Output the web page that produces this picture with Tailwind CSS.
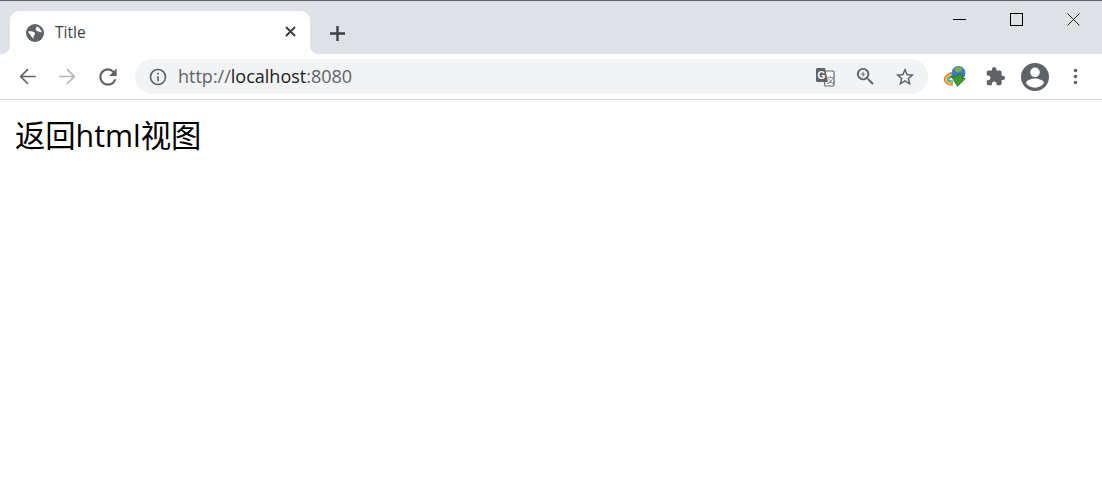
<!DOCTYPE html>
<html lang="zh">
<head>
  <meta charset="UTF-8" />
  <title>Title</title>
  <script src="https://cdn.jsdelivr.net/npm/@tailwindcss/browser@4"></script>
</head>
<body class="bg-white h-[488px] w-[1102px] overflow-hidden font-['Open_Sans','Noto_Sans_CJK_SC',sans-serif]">

  <!-- tab strip -->
  <div class="h-[54px] bg-[#dee1e6] border-t border-[#5f6368] flex items-end pl-[10px]">
    <div class="relative w-[300px] h-[43px] bg-white rounded-t-[9px] flex items-center pl-[16px] pr-[14px]">
      <svg class="absolute -left-[8px] bottom-0 w-[8px] h-[8px]" viewBox="0 0 8 8"><path d="M8 0v8H0a8 8 0 0 0 8-8z" fill="#fff"/></svg>
      <svg class="absolute -right-[8px] bottom-0 w-[8px] h-[8px]" viewBox="0 0 8 8"><path d="M0 0v8h8a8 8 0 0 1-8-8z" fill="#fff"/></svg>
      <svg class="w-[18px] h-[18px]" viewBox="0 0 24 24">
        <circle cx="12" cy="12" r="12" fill="#5f6368"/>
        <path d="M3 10c3-1 6 0 8 1s1 3 0 4-1 3-1 5c-1-2-3-3-4-5s-3-3-3-5z" fill="#fff"/>
        <path d="M14 3c3 1 6 4 7 8-2 0-3-1-5-1-1-1-3-1-3-3s2-2 1-4z" fill="#fff"/>
      </svg>
      <span class="ml-[11px] text-[15.500px] text-[#3c4043]">Title</span>
      <svg class="ml-auto mb-[2px] w-[11px] h-[11px]" viewBox="0 0 11 11" stroke="#3c4043" stroke-width="2" fill="none"><path d="M1 1l9 9M10 1l-9 9"/></svg>
    </div>
    <svg class="ml-[20px] mb-[13px] w-[15px] h-[15px]" viewBox="0 0 15 15" stroke="#3c4043" stroke-width="2.400" fill="none"><path d="M7.500 0v15M0 7.500h15"/></svg>
    <!-- window controls -->
    <div class="ml-auto self-start flex items-center h-[37px] pr-[22px] gap-[44px]">
      <div class="w-[13px] h-px bg-black"></div>
      <div class="w-[13px] h-[13px] border border-black"></div>
      <svg class="w-[13px] h-[13px]" viewBox="0 0 13 13" stroke="#222" stroke-width="1" fill="none"><path d="M.5.500l12 12M12.500.500l-12 12"/></svg>
    </div>
  </div>

  <!-- toolbar -->
  <div class="h-[46px] bg-white border-b border-[#dadce0] flex items-center pl-[7px]">
    <div class="w-[40px] flex justify-center">
      <svg class="w-[25px] h-[25px]" viewBox="0 0 24 24" fill="#5f6368"><path d="M20 11.200H7.300l5.800-5.800L12 4.300l-7.700 7.700 7.700 7.700 1.100-1.100-5.800-5.800H20v-1.600z"/></svg>
    </div>
    <div class="w-[40px] flex justify-center">
      <svg class="w-[25px] h-[25px]" viewBox="0 0 24 24" fill="#b4b6b9"><path d="M12 4.300l-1.100 1.100 5.800 5.800H4v1.600h12.700l-5.800 5.800 1.100 1.100 7.700-7.700z"/></svg>
    </div>
    <div class="w-[40px] ml-[1px] flex justify-center">
      <svg class="w-[26px] h-[26px]" viewBox="0 0 24 24" fill="#5f6368"><path d="M17.650 6.350A7.960 7.960 0 0 0 12 4c-4.420 0-7.990 3.580-7.990 8s3.570 8 7.990 8c3.730 0 6.840-2.550 7.730-6h-2.080A5.990 5.990 0 0 1 12 18c-3.310 0-6-2.690-6-6s2.690-6 6-6c1.660 0 3.140.69 4.220 1.780L13 11h7V4l-2.350 2.350z"/></svg>
    </div>
    <!-- omnibox -->
    <div class="ml-[7px] w-[793px] h-[35px] rounded-full bg-[#f1f3f4] flex items-center pl-[13px] pr-[3px]">
      <svg class="w-[20px] h-[20px]" viewBox="0 0 24 24" fill="#5f6368"><path d="M11 7h2v2h-2zm0 4h2v6h-2zm1-9a10 10 0 1 0 0 20 10 10 0 0 0 0-20zm0 18a8 8 0 1 1 0-16 8 8 0 0 1 0 16z"/></svg>
      <span class="ml-[10px] text-[18px] text-[#5f6368]">http://<span class="text-[#202124]">localhost</span>:8080</span>
      <!-- translate -->
      <div class="ml-auto w-[40px] flex justify-center">
        <svg class="w-[20px] h-[20px]" viewBox="0 0 20 20"><path d="M8 4h9.500a1.500 1.500 0 0 1 1.500 1.500v12a1.500 1.500 0 0 1-1.500 1.500H10z" fill="#fff" stroke="#5f6368" stroke-width="1.200"/><path d="M2.500 1H10l3 14H2.500A1.500 1.500 0 0 1 1 13.500v-11A1.500 1.500 0 0 1 2.500 1z" fill="#5f6368"/><text x="2.500" y="12" font-size="10" font-weight="700" fill="#fff" font-family="Liberation Sans">G</text><text x="11.500" y="16" font-size="8" fill="#5f6368" font-family="Noto Sans CJK SC">文</text></svg>
      </div>
      <div class="w-[40px] flex justify-center">
        <svg class="w-[23px] h-[23px]" viewBox="0 0 24 24" fill="#5f6368"><path d="M15.500 14h-.790l-.280-.270A6.470 6.470 0 0 0 16 9.500 6.500 6.500 0 1 0 9.500 16c1.610 0 3.090-.590 4.230-1.570l.270.280v.790l5 4.990L20.490 19l-4.990-5zm-6 0C7.010 14 5 11.990 5 9.500S7.010 5 9.500 5 14 7.010 14 9.500 11.990 14 9.500 14z"/><path d="M12 10h-2v2H9v-2H7V9h2V7h1v2h2v1z"/></svg>
      </div>
      <div class="w-[40px] flex justify-center">
        <svg class="w-[22px] h-[22px]" viewBox="0 0 24 24" fill="#5f6368"><path d="M22 9.240l-7.190-.620L12 2 9.190 8.630 2 9.240l5.460 4.730L5.820 21 12 17.270 18.180 21l-1.630-7.030L22 9.240zM12 15.400l-3.760 2.270 1-4.280-3.320-2.880 4.380-.380L12 6.100l1.710 4.040 4.380.380-3.320 2.880 1 4.280L12 15.400z"/></svg>
      </div>
    </div>
    <!-- idm extension -->
    <div class="ml-[7px] w-[40px] flex justify-center">
      <svg class="w-[24px] h-[24px]" viewBox="0 0 24 24" fill="none">
        <path d="M11 7.500C5 8 1.500 11.500 1.500 14.500S5 20 10 20" stroke="#e8703a" stroke-width="1.500"/>
        <path d="M11 9C6.500 9.500 3 12 3 14.500S6 18.600 10 18.600" stroke="#f2c230" stroke-width="1.400"/>
        <path d="M11 10.500C7.500 11 4.500 12.500 4.500 14.500S7 17.300 10 17.300" stroke="#5bb748" stroke-width="1.400"/>
        <path d="M11 12C8.500 12.300 6 13 6 14.500S8 16 10 16" stroke="#4a8fd0" stroke-width="1.200"/>
        <circle cx="15.500" cy="8" r="7" fill="#3d7cc9"/>
        <path d="M13 2.500c2-1 5-.5 6.500 1l-1.500 3-4.500 1-2-2.500z" fill="#7fb04a"/>
        <path d="M8 11l6 1 .5-3 5 .5-.5 3.500 3.500.5-8 8z" fill="#3f9b2d" stroke="#1f5f17" stroke-width=".6"/>
      </svg>
    </div>
    <div class="w-[40px] flex justify-center">
      <svg class="w-[21px] h-[21px]" viewBox="0 0 24 24" fill="#5f6368"><path d="M20.500 11H19V7c0-1.100-.9-2-2-2h-4V3.500C13 2.120 11.880 1 10.500 1S8 2.120 8 3.500V5H4c-1.100 0-1.990.9-1.990 2v3.800H3.500c1.490 0 2.700 1.210 2.700 2.700s-1.210 2.700-2.700 2.700H2V20c0 1.100.9 2 2 2h3.800v-1.500c0-1.490 1.210-2.700 2.700-2.700 1.490 0 2.700 1.210 2.700 2.700V22H17c1.100 0 2-.9 2-2v-4h1.500c1.380 0 2.500-1.120 2.500-2.500S21.880 11 20.500 11z"/></svg>
    </div>
    <div class="w-[40px] flex justify-center">
      <svg class="w-[28px] h-[28px]" viewBox="0 0 28 28" fill="#5f6368"><path d="M14 0a14 14 0 1 0 0 28 14 14 0 0 0 0-28zm0 4.500a4.800 4.800 0 1 1 0 9.600 4.800 4.800 0 0 1 0-9.600zm0 20.300c-3.700 0-7-1.800-9-4.700.1-3 6-4.600 9-4.600s8.900 1.600 9 4.600c-2 2.900-5.300 4.700-9 4.700z"/></svg>
    </div>
    <div class="w-[40px] flex justify-center">
      <svg class="w-[5px] h-[17px]" viewBox="0 0 5 17" fill="#5f6368"><circle cx="2.500" cy="2.500" r="1.800"/><circle cx="2.500" cy="8.500" r="1.800"/><circle cx="2.500" cy="14.500" r="1.800"/></svg>
    </div>
  </div>

  <!-- page content -->
  <p class="pl-[15px] pt-[14px] text-[30.300px] leading-[44px] text-black">返回html视图</p>

</body>
</html>
